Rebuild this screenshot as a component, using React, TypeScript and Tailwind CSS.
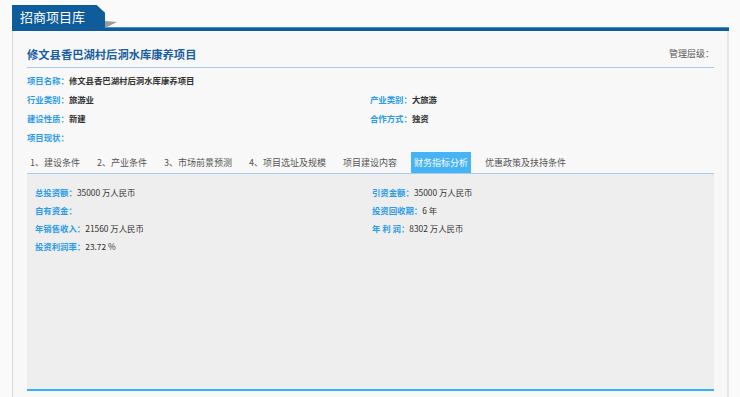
import React from 'react';

const font = { fontFamily: '"Noto Sans CJK SC", "Noto Sans", sans-serif' };

const tabs = ['1、建设条件', '2、产业条件', '3、市场前景预测', '4、项目选址及规模', '项目建设内容', '财务指标分析', '优惠政策及扶持条件'];

const Field = ({ label, value, bold = true }: { label: string; value?: string; bold?: boolean }) => (
  <div className="flex items-center h-full whitespace-nowrap">
    <span className="text-[#2c9be8] font-bold">{label}</span>
    <span className={`text-[#333] ${bold ? 'font-bold' : ''}`}>{value}</span>
  </div>
);

export default function App() {
  return (
    <div className="w-[740px] h-[397px] bg-[#fafafa] overflow-hidden" style={font}>
      <div className="ml-[12px] w-[717px]">
        {/* Header */}
        <div className="relative flex h-[26px] mt-[5px]">
          <div className="w-[93px] h-full bg-[#0f5c9b] text-white text-[13px] leading-[24px] pl-[8px] [clip-path:polygon(0_0,91%_0,100%_30%,100%_100%,0_100%)]">
            招商项目库
          </div>
          <div className="flex-1 flex flex-col justify-end">
            <div className="h-[4px] bg-[#0f5c9b] border-t border-[#4a8fc8]" />
          </div>
          <svg className="absolute left-[93px] top-[16px]" width="12" height="7" viewBox="0 0 12 7">
            <polygon points="0,0 12,1 0,7" fill="#9a9a9a" />
          </svg>
        </div>

        {/* Body */}
        <div className="bg-[#f8f8f8] border-l border-[#d8d8d8] border-r-2 border-r-[#e6e6e6] pl-[14px] pr-[13px] h-[366px]">
          <div className="flex items-center justify-between pt-[15px] pb-[5px] border-b border-[#a9cbe9]">
            <div className="text-[11.3px] leading-[16px] font-bold text-[#1b5e9e]">修文县香巴湖村后洞水库康养项目</div>
            <div className="text-[9px] text-[#555]">管理层级：</div>
          </div>

          <div className="mt-[3px] grid grid-cols-[343px_1fr] auto-rows-[19px] text-[8.4px]">
            <div className="col-span-2"><Field label="项目名称：" value="修文县香巴湖村后洞水库康养项目" /></div>
            <Field label="行业类别：" value="旅游业" />
            <Field label="产业类别：" value="大旅游" />
            <Field label="建设性质：" value="新建" />
            <Field label="合作方式：" value="独资" />
            <div className="col-span-2"><Field label="项目现状：" /></div>
          </div>

          <div className="mt-[5px] flex gap-[11px] h-[22px] border-b border-[#a6cdee] text-[9px]">
            {tabs.map((t) => (
              <div
                key={t}
                className={`px-[3px] leading-[22px] whitespace-nowrap ${t === '财务指标分析' ? 'bg-[#46b3f4] text-white' : 'text-[#555]'}`}
              >
                {t}
              </div>
            ))}
          </div>

          <div className="bg-[#eeeeee] h-[217px] border-b-2 border-[#35b1f6] pt-[9px] pl-[8px]">
            <div className="grid grid-cols-[337px_1fr] auto-rows-[18px] text-[8.4px]">
              <Field label="总投资额：" value="35000 万人民币" bold={false} />
              <Field label="引资金额：" value="35000 万人民币" bold={false} />
              <Field label="自有资金：" />
              <Field label="投资回收期：" value="6 年" bold={false} />
              <Field label="年销售收入：" value="21560 万人民币" bold={false} />
              <Field label="年 利 润：" value="8302 万人民币" bold={false} />
              <Field label="投资利润率：" value="23.72 %" bold={false} />
            </div>
          </div>
        </div>
      </div>
    </div>
  );
}
